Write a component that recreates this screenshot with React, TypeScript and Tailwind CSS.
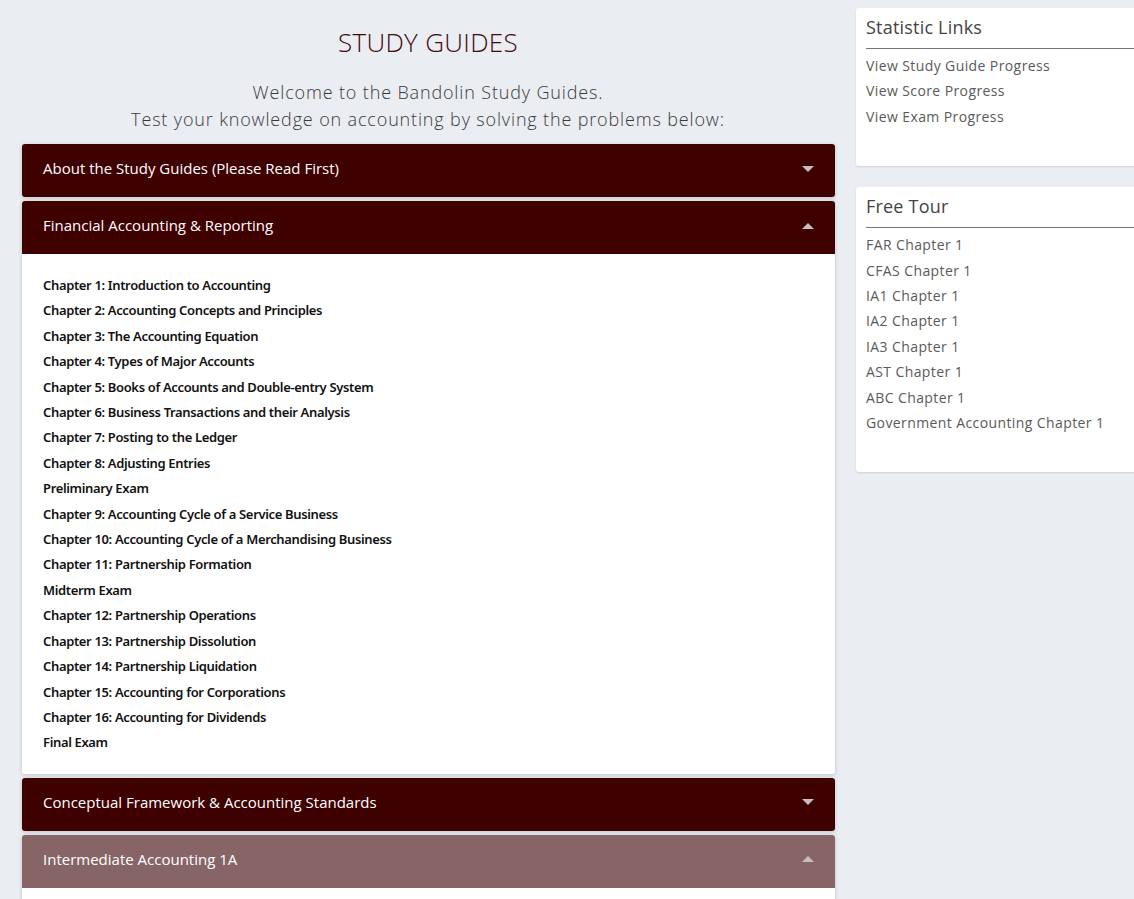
import { useState } from "react";

const chapters = [
  "Chapter 1: Introduction to Accounting",
  "Chapter 2: Accounting Concepts and Principles",
  "Chapter 3: The Accounting Equation",
  "Chapter 4: Types of Major Accounts",
  "Chapter 5: Books of Accounts and Double-entry System",
  "Chapter 6: Business Transactions and their Analysis",
  "Chapter 7: Posting to the Ledger",
  "Chapter 8: Adjusting Entries",
  "Preliminary Exam",
  "Chapter 9: Accounting Cycle of a Service Business",
  "Chapter 10: Accounting Cycle of a Merchandising Business",
  "Chapter 11: Partnership Formation",
  "Midterm Exam",
  "Chapter 12: Partnership Operations",
  "Chapter 13: Partnership Dissolution",
  "Chapter 14: Partnership Liquidation",
  "Chapter 15: Accounting for Corporations",
  "Chapter 16: Accounting for Dividends",
  "Final Exam",
];

const sections = [
  { title: "About the Study Guides (Please Read First)", items: [] as string[] },
  { title: "Financial Accounting & Reporting", items: chapters },
  { title: "Conceptual Framework & Accounting Standards", items: [] as string[] },
  { title: "Intermediate Accounting 1A", items: [] as string[] },
];

const statLinks = ["View Study Guide Progress", "View Score Progress", "View Exam Progress"];

const tourLinks = [
  "FAR Chapter 1",
  "CFAS Chapter 1",
  "IA1 Chapter 1",
  "IA2 Chapter 1",
  "IA3 Chapter 1",
  "AST Chapter 1",
  "ABC Chapter 1",
  "Government Accounting Chapter 1",
];

function Caret({ up }: { up: boolean }) {
  return (
    <svg width="12" height="8" viewBox="0 0 12 8" className="fill-[#c9bdbd]">
      {up ? <path d="M0 7 L6 1 L12 7 Z" /> : <path d="M0 1 L12 1 L6 7 Z" />}
    </svg>
  );
}

function SideCard({ title, links }: { title: string; links: string[] }) {
  return (
    <div className="bg-white rounded-[3px] shadow-[0_1px_2px_rgba(0,0,0,0.12)] pl-[10px] pr-[3px] pt-[7px] pb-[37px]">
      <h3 className="text-[18px] leading-[24px] text-[#444] tracking-[0.2px]">{title}</h3>
      <hr className="border-t border-[#777] mt-[9px] mb-[4px]" />
      <ul>
        {links.map((l) => (
          <li
            key={l}
            className="text-[14px] leading-[25.4px] text-[#5a5a5a] tracking-[0.4px] cursor-pointer hover:underline"
          >
            {l}
          </li>
        ))}
      </ul>
    </div>
  );
}

export default function App() {
  const [open, setOpen] = useState<number[]>([1, 3]);

  const toggle = (i: number) => {
    setOpen(open.includes(i) ? open.filter((x) => x !== i) : [...open, i]);
  };

  return (
    <main className="min-h-screen bg-[#eaedf2] overflow-hidden font-['Open_Sans',sans-serif]">
      <div className="flex pl-[20px] pt-[8px] gap-[20px]">
        {/* left column */}
        <div className="w-[816px] shrink-0">
          <h1 className="text-center text-[26px] leading-[34px] font-light text-[#43090c] tracking-[0.3px] mt-[17px]">
            STUDY GUIDES
          </h1>
          <div className="text-center text-[18px] leading-[27px] font-light text-[#3a3a3a] tracking-[0.85px] mt-[20px]">
            <p>Welcome to the Bandolin Study Guides.</p>
            <p>Test your knowledge on accounting by solving the problems below:</p>
          </div>

          <div className="mt-[11px] flex flex-col gap-[4px] pl-[2px] pr-[1px]">
            {sections.map((s, i) => {
              const isOpen = open.includes(i);
              const faded = i === 3;
              return (
                <div key={s.title} className="rounded-[3px] shadow-[0_1px_4px_rgba(0,0,0,0.18)] overflow-hidden">
                  <button
                    onClick={() => toggle(i)}
                    className={`w-full h-[53px] flex items-center justify-between pl-[21px] pr-[21px] pb-[4px] text-left text-[15px] text-white ${
                      faded ? "bg-[#876566]" : "bg-[#3f0000]"
                    }`}
                  >
                    <span>{s.title}</span>
                    <Caret up={isOpen} />
                  </button>
                  {isOpen && (
                    <div className="bg-white pl-[21px] pt-[19px] pb-[18px] min-h-[20px]">
                      {s.items.map((c) => (
                        <div
                          key={c}
                          className="text-[13px] leading-[25.4px] font-semibold text-[#111] font-['Noto_Sans',sans-serif] tracking-[-0.35px]"
                        >
                          {c}
                        </div>
                      ))}
                    </div>
                  )}
                </div>
              );
            })}
          </div>
        </div>

        {/* right column */}
        <aside className="w-[284px] shrink-0 flex flex-col gap-[21px]">
          <SideCard title="Statistic Links" links={statLinks} />
          <SideCard title="Free Tour" links={tourLinks} />
        </aside>
      </div>
    </main>
  );
}
